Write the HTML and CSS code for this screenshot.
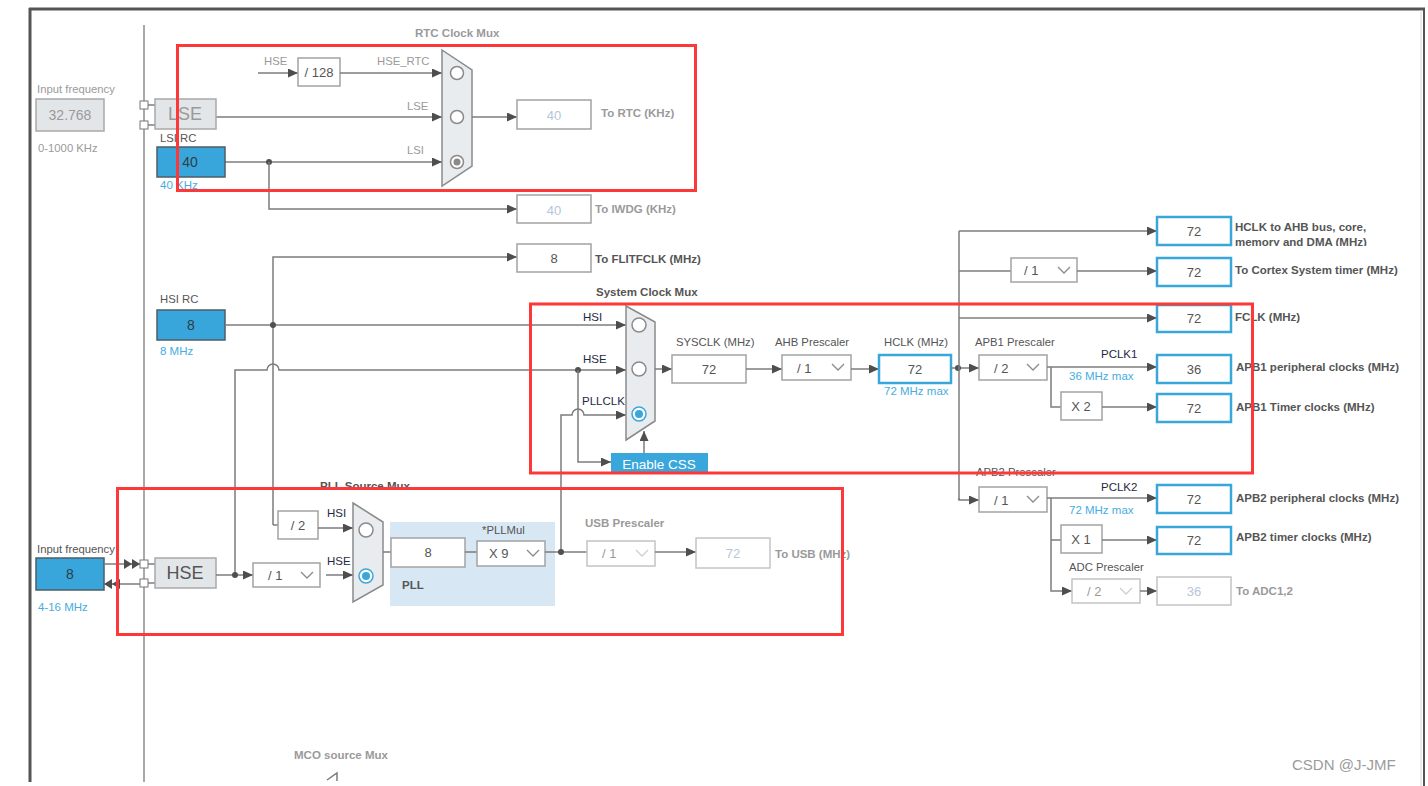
FILE: index.html
```html
<!DOCTYPE html>
<html>
<head>
    <title>Clock Configuration</title>
    <link rel="stylesheet" href="styles.css">
</head>
<body>
<svg class="diagram" width="1428" height="786" viewBox="0 0 1428 786">
    <defs>
        <marker id="ah" markerWidth="11" markerHeight="9" refX="10" refY="4.5" orient="auto" markerUnits="userSpaceOnUse">
            <path d="M0,0 L10,4.5 L0,9 Z" class="head"/>
        </marker>
        <clipPath id="clipAhb">
            <rect x="1234" y="212" width="190" height="34"/>
        </clipPath>
    </defs>

    <!-- frame -->
    <line class="frame" x1="29" y1="9" x2="1425" y2="9"/>
    <line class="frame" x1="30" y1="8" x2="30" y2="782"/>
    <line class="frame-r" x1="1424" y1="8" x2="1424" y2="786"/>
    <line class="frame-in" x1="1421" y1="10" x2="1421" y2="786"/>
    <line class="rail" x1="144" y1="25" x2="144" y2="782"/>

    <!-- ===== RTC ===== -->
    <text class="t b m" x="415" y="33">RTC Clock Mux</text>
    <text class="t m" x="264" y="61">HSE</text>
    <line class="wire arrow" x1="258" y1="73" x2="298" y2="73"/>
    <rect class="box" x="298" y="58" width="42" height="28"/>
    <text class="t v" x="319" y="72">/ 128</text>
    <text class="t m" x="377" y="61">HSE_RTC</text>
    <line class="wire arrow" x1="340" y1="73" x2="442" y2="73"/>
    <text class="t m" x="407" y="106">LSE</text>
    <line class="wire arrow" x1="216" y1="117" x2="442" y2="117"/>
    <text class="t m" x="407" y="150">LSI</text>
    <line class="wire arrow" x1="225" y1="162" x2="442" y2="162"/>
    <circle class="dot" cx="269" cy="162" r="3"/>
    <polygon class="mux" points="442,50 472,70 472,166 442,186"/>
    <circle class="radio" cx="457" cy="73" r="6.5"/>
    <circle class="radio" cx="457" cy="117" r="6.5"/>
    <circle class="radio" cx="457" cy="162" r="6.5"/>
    <circle class="radio-dot off" cx="457" cy="162" r="3.5"/>
    <line class="wire arrow" x1="472" y1="117" x2="517" y2="117"/>
    <rect class="box" x="517" y="100" width="74" height="29"/>
    <text class="t v dim" x="554" y="115">40</text>
    <text class="t b m" x="601" y="113">To RTC (KHz)</text>
    <path class="wire arrow" d="M269,162 V209 H517"/>
    <rect class="box" x="517" y="195" width="74" height="28"/>
    <text class="t v dim" x="554" y="210">40</text>
    <text class="t b m" x="595" y="209">To IWDG (KHz)</text>

    <!-- LSE / LSI sources -->
    <text class="t m" x="37" y="89">Input frequency</text>
    <rect class="box-off" x="36" y="99" width="68" height="32"/>
    <text class="t v m big" x="70" y="115">32.768</text>
    <text class="t m" x="38" y="148">0-1000 KHz</text>
    <rect class="pin" x="140" y="101" width="8" height="8"/>
    <rect class="pin" x="140" y="121" width="8" height="8"/>
    <line class="wire" x1="148" y1="105" x2="155" y2="105"/>
    <line class="wire" x1="148" y1="125" x2="155" y2="125"/>
    <rect class="box-off" x="155" y="99" width="61" height="30"/>
    <text class="t v huge m" x="185" y="114">LSE</text>
    <text class="t" x="160" y="138">LSI RC</text>
    <rect class="box-src" x="157" y="147" width="68" height="30"/>
    <text class="t v big dark" x="190" y="162">40</text>
    <text class="t blue" x="160" y="185">40 KHz</text>

    <!-- ===== HSI ===== -->
    <path class="wire arrow" d="M273,525 V257 H517"/>
    <path class="wire" d="M273,525 H278"/>
    <rect class="box" x="517" y="244" width="74" height="28"/>
    <text class="t v" x="554" y="258">8</text>
    <text class="t b" x="595" y="259">To FLITFCLK (MHz)</text>
    <text class="t" x="160" y="299">HSI RC</text>
    <rect class="box-src" x="157" y="310" width="68" height="30"/>
    <text class="t v big dark" x="191" y="325">8</text>
    <text class="t blue" x="160" y="351">8 MHz</text>
    <line class="wire arrow" x1="225" y1="325" x2="626" y2="325"/>
    <circle class="dot" cx="273" cy="325" r="3"/>

    <!-- HSE feed to system mux -->
    <path class="wire arrow" d="M235,575 V370 H267 A6,6 0 0 1 279,370 H626"/>
    <circle class="dot" cx="578" cy="370" r="3"/>
    <path class="wire arrow" d="M578,370 V462 H611"/>
    <path class="wire arrow" d="M561,552 V415 H572 A6,6 0 0 1 584,415 H626"/>

    <!-- ===== System clock mux ===== -->
    <text class="t b" x="596" y="292">System Clock Mux</text>
    <text class="t navy" x="583" y="317">HSI</text>
    <text class="t navy" x="583" y="359">HSE</text>
    <text class="t navy" x="582" y="401">PLLCLK</text>
    <polygon class="mux" points="626,306 655,322 655,421 626,440"/>
    <circle class="radio" cx="639" cy="325" r="7"/>
    <circle class="radio" cx="639" cy="369" r="7"/>
    <circle class="radio on" cx="639" cy="414" r="7"/>
    <circle class="radio-dot" cx="639" cy="414" r="4"/>
    <line class="wire arrow" x1="644" y1="453" x2="644" y2="431"/>
    <rect class="btn" x="611" y="453" width="97" height="21"/>
    <text class="t v btn-t" x="659" y="464">Enable CSS</text>

    <line class="wire arrow" x1="655" y1="369" x2="672" y2="369"/>
    <text class="t" x="676" y="342">SYSCLK (MHz)</text>
    <rect class="box" x="672" y="355" width="74" height="28"/>
    <text class="t v" x="709" y="369">72</text>
    <line class="wire arrow" x1="746" y1="369" x2="782" y2="369"/>
    <text class="t" x="775" y="342">AHB Prescaler</text>
    <rect class="box" x="782" y="355" width="69" height="25"/>
    <text class="t sel" x="797" y="368">/ 1</text>
    <path class="chev" d="M832,364 L838,370 L844,364"/>
    <line class="wire arrow" x1="851" y1="369" x2="879" y2="369"/>
    <text class="t" x="884" y="342">HCLK (MHz)</text>
    <rect class="box-out" x="879" y="355" width="72" height="28"/>
    <text class="t v" x="915" y="369">72</text>
    <text class="t blue" x="884" y="391">72 MHz max</text>

    <!-- ===== HCLK distribution ===== -->
    <line class="wire arrow" x1="951" y1="368" x2="979" y2="368"/>
    <circle class="dot" cx="958" cy="368" r="3"/>
    <path class="wire" d="M959,231 V500"/>

    <line class="wire arrow" x1="959" y1="231" x2="1157" y2="231"/>
    <rect class="box-out" x="1157" y="217" width="74" height="28"/>
    <text class="t v" x="1194" y="231">72</text>
    <g clip-path="url(#clipAhb)">
        <text class="t b" x="1235" y="227">HCLK to AHB bus, core,</text>
        <text class="t b" x="1235" y="242">memory and DMA (MHz)</text>
    </g>

    <line class="wire" x1="959" y1="271" x2="1011" y2="271"/>
    <rect class="box" x="1011" y="258" width="66" height="24"/>
    <text class="t sel" x="1024" y="270">/ 1</text>
    <path class="chev" d="M1058,267 L1064,273 L1070,267"/>
    <line class="wire arrow" x1="1077" y1="271" x2="1157" y2="271"/>
    <rect class="box-out" x="1157" y="258" width="74" height="28"/>
    <text class="t v" x="1194" y="272">72</text>
    <text class="t b" x="1235" y="270">To Cortex System timer (MHz)</text>

    <line class="wire arrow" x1="959" y1="318" x2="1157" y2="318"/>
    <rect class="box-out" x="1157" y="305" width="74" height="27"/>
    <text class="t v" x="1194" y="318">72</text>
    <text class="t b" x="1235" y="317">FCLK (MHz)</text>

    <!-- APB1 -->
    <text class="t" x="975" y="342">APB1 Prescaler</text>
    <rect class="box" x="979" y="355" width="68" height="25"/>
    <text class="t sel" x="994" y="368">/ 2</text>
    <path class="chev" d="M1027,364 L1033,370 L1039,364"/>
    <line class="wire arrow" x1="1047" y1="367" x2="1157" y2="367"/>
    <text class="t navy" x="1101" y="354">PCLK1</text>
    <text class="t blue" x="1069" y="376">36 MHz max</text>
    <rect class="box-out" x="1157" y="355" width="74" height="28"/>
    <text class="t v" x="1194" y="369">36</text>
    <text class="t b" x="1236" y="367">APB1 peripheral clocks (MHz)</text>
    <path class="wire" d="M1051,367 V407 H1061"/>
    <rect class="box" x="1061" y="392" width="41" height="28"/>
    <text class="t v" x="1081" y="406">X 2</text>
    <line class="wire arrow" x1="1102" y1="407" x2="1157" y2="407"/>
    <rect class="box-out" x="1157" y="394" width="74" height="28"/>
    <text class="t v" x="1194" y="408">72</text>
    <text class="t b" x="1236" y="407">APB1 Timer clocks (MHz)</text>

    <!-- APB2 -->
    <text class="t" x="976" y="472">APB2 Prescaler</text>
    <path class="wire arrow" d="M959,498 V500 H979"/>
    <rect class="box" x="979" y="487" width="68" height="25"/>
    <text class="t sel" x="994" y="500">/ 1</text>
    <path class="chev" d="M1027,496 L1033,502 L1039,496"/>
    <line class="wire arrow" x1="1047" y1="498" x2="1157" y2="498"/>
    <text class="t navy" x="1101" y="487">PCLK2</text>
    <text class="t blue" x="1069" y="510">72 MHz max</text>
    <rect class="box-out" x="1157" y="485" width="74" height="28"/>
    <text class="t v" x="1194" y="499">72</text>
    <text class="t b" x="1236" y="498">APB2 peripheral clocks (MHz)</text>
    <path class="wire arrow" d="M1051,498 V591 H1072"/>
    <line class="wire" x1="1051" y1="540" x2="1061" y2="540"/>
    <rect class="box" x="1061" y="525" width="41" height="28"/>
    <text class="t v" x="1081" y="539">X 1</text>
    <line class="wire arrow" x1="1102" y1="540" x2="1157" y2="540"/>
    <rect class="box-out" x="1157" y="527" width="74" height="27"/>
    <text class="t v" x="1194" y="540">72</text>
    <text class="t b" x="1236" y="537">APB2 timer clocks (MHz)</text>
    <text class="t" x="1069" y="567">ADC Prescaler</text>
    <rect class="box off" x="1072" y="579" width="68" height="24"/>
    <text class="t sel m" x="1087" y="591">/ 2</text>
    <path class="chev off" d="M1120,588 L1126,594 L1132,588"/>
    <line class="wire arrow" x1="1140" y1="591" x2="1157" y2="591"/>
    <rect class="box off" x="1157" y="577" width="74" height="28"/>
    <text class="t v dim" x="1194" y="591">36</text>
    <text class="t b m" x="1236" y="591">To ADC1,2</text>

    <!-- ===== HSE source ===== -->
    <text class="t" x="37" y="549">Input frequency</text>
    <rect class="box-src" x="36" y="558" width="68" height="32"/>
    <text class="t v big dark" x="70" y="574">8</text>
    <text class="t blue" x="38" y="607">4-16 MHz</text>
    <line class="wire" x1="104" y1="564" x2="140" y2="564"/>
    <polygon class="head" points="124,559 132,564 124,569"/>
    <polygon class="head" points="132,559 140,564 132,569"/>
    <line class="wire" x1="104" y1="584" x2="140" y2="584"/>
    <polygon class="head" points="112,579 104,584 112,589"/>
    <polygon class="head" points="120,579 112,584 120,589"/>
    <rect class="pin" x="140" y="560" width="8" height="8"/>
    <rect class="pin" x="140" y="579" width="8" height="8"/>
    <line class="wire" x1="148" y1="564" x2="155" y2="564"/>
    <line class="wire" x1="148" y1="583" x2="155" y2="583"/>
    <rect class="box-off" x="155" y="558" width="61" height="30"/>
    <text class="t v huge" x="185" y="573">HSE</text>
    <line class="wire arrow" x1="216" y1="575" x2="253" y2="575"/>
    <circle class="dot" cx="235" cy="575" r="3"/>
    <rect class="box" x="253" y="563" width="67" height="24"/>
    <text class="t sel" x="268" y="575">/ 1</text>
    <path class="chev" d="M301,572 L307,578 L313,572"/>
    <line class="wire arrow" x1="326" y1="575" x2="353" y2="575"/>

    <!-- ===== PLL ===== -->
    <text class="t b" x="320" y="486">PLL Source Mux</text>
    <rect class="box" x="278" y="511" width="40" height="28"/>
    <text class="t v" x="298" y="525">/ 2</text>
    <line class="wire arrow" x1="318" y1="528" x2="353" y2="528"/>
    <text class="t navy" x="327" y="513">HSI</text>
    <text class="t navy" x="327" y="561">HSE</text>
    <polygon class="mux" points="353,503 383,522 383,585 353,602"/>
    <circle class="radio" cx="366" cy="530" r="7"/>
    <circle class="radio on" cx="366" cy="576" r="7"/>
    <circle class="radio-dot" cx="366" cy="576" r="4"/>
    <rect class="pll" x="390" y="522" width="165" height="84"/>
    <line class="wire" x1="383" y1="552" x2="391" y2="552"/>
    <rect class="box" x="391" y="538" width="74" height="29"/>
    <text class="t v" x="428" y="552">8</text>
    <line class="wire" x1="465" y1="552" x2="477" y2="552"/>
    <text class="t" x="482" y="530">*PLLMul</text>
    <rect class="box" x="477" y="541" width="68" height="25"/>
    <text class="t sel" x="489" y="553">X 9</text>
    <path class="chev" d="M527,550 L533,556 L539,550"/>
    <text class="t b" x="402" y="585">PLL</text>
    <line class="wire" x1="545" y1="552" x2="587" y2="552"/>
    <circle class="dot" cx="561" cy="552" r="3"/>

    <!-- USB -->
    <text class="t b m" x="585" y="523">USB Prescaler</text>
    <rect class="box off" x="587" y="541" width="68" height="25"/>
    <text class="t sel m" x="602" y="553">/ 1</text>
    <path class="chev off" d="M636,550 L642,556 L648,550"/>
    <line class="wire arrow" x1="655" y1="552" x2="696" y2="552"/>
    <rect class="box off" x="696" y="538" width="74" height="30"/>
    <text class="t v dim" x="733" y="553">72</text>
    <text class="t b m" x="775" y="554">To USB (MHz)</text>

    <!-- MCO -->
    <text class="t b m" x="294" y="755">MCO source Mux</text>
    <path class="wire" d="M327,780 L337,773 V781"/>

    <!-- highlights -->
    <rect class="hl" x="177.5" y="45.5" width="518" height="145"/>
    <rect class="hl" x="530.5" y="304" width="722" height="169"/>
    <rect class="hl" x="117.5" y="488.5" width="725" height="146"/>

    <text class="mark" x="1292" y="770">CSDN @J-JMF</text>
</svg>
</body>
</html>
```

FILE: styles.css
```css
body {
    margin: 0;
    background: #fff;
}

.diagram {
    display: block;
}

/* frame */
.frame {
    stroke: #555;
    stroke-width: 3;
}
.frame-r {
    stroke: #555;
    stroke-width: 2;
}
.frame-in {
    stroke: #d6d6d6;
    stroke-width: 1;
}
.rail {
    stroke: #8c8c8c;
    stroke-width: 1.5;
}

/* wiring */
.wire {
    stroke: #7c7c7c;
    stroke-width: 1.5;
    fill: none;
}
.arrow {
    marker-end: url(#ah);
}
.head {
    fill: #4e4e4e;
}
.dot {
    fill: #505050;
}
.pin {
    fill: #fff;
    stroke: #777;
    stroke-width: 1;
}

/* blocks */
.box {
    fill: #fff;
    stroke: #a3a3a3;
    stroke-width: 1.5;
}
.box.off {
    stroke: #c4c4c4;
}
.box-out {
    fill: #fff;
    stroke: #3aa7db;
    stroke-width: 2.5;
}
.box-src {
    fill: #38a6da;
    stroke: #4d5d68;
    stroke-width: 1.5;
}
.box-off {
    fill: #e3e6e9;
    stroke: #a9a9a9;
    stroke-width: 1.5;
}
.mux {
    fill: #e9ecef;
    stroke: #8a8a8a;
    stroke-width: 1.5;
}
.radio {
    fill: #fff;
    stroke: #8a8a8a;
    stroke-width: 1.5;
}
.radio.on {
    stroke: #3aa7db;
}
.radio-dot {
    fill: #3aa7db;
}
.radio-dot.off {
    fill: #8a8a8a;
}
.chev {
    fill: none;
    stroke: #8a8a8a;
    stroke-width: 1.3;
}
.chev.off {
    stroke: #cfcfcf;
}
.pll {
    fill: #d8e7f4;
}
.btn {
    fill: #39a7db;
}
.hl {
    fill: none;
    stroke: #fd3838;
    stroke-width: 3;
}

/* text */
.t {
    font-family: "Liberation Sans", Arial, sans-serif;
    font-size: 11.3px;
    fill: #555;
    dominant-baseline: central;
}
.b {
    font-weight: bold;
    font-size: 11.5px;
}
.m {
    fill: #9a9a9a;
}
.navy {
    fill: #1e2a42;
    font-size: 11.5px;
}
.blue {
    fill: #46ade0;
    font-size: 11.5px;
}
.v {
    font-size: 13px;
    text-anchor: middle;
}
.sel {
    font-size: 13px;
}
.dim {
    fill: #b4c6da;
}
.dark {
    fill: #2f3d47;
}
.big {
    font-size: 14px;
}
.huge {
    font-size: 18px;
}
.btn-t {
    fill: #fff;
    font-size: 13.5px;
}
.mark {
    font-family: "Liberation Sans", Arial, sans-serif;
    font-size: 15px;
    fill: #9b9b9b;
}
```
